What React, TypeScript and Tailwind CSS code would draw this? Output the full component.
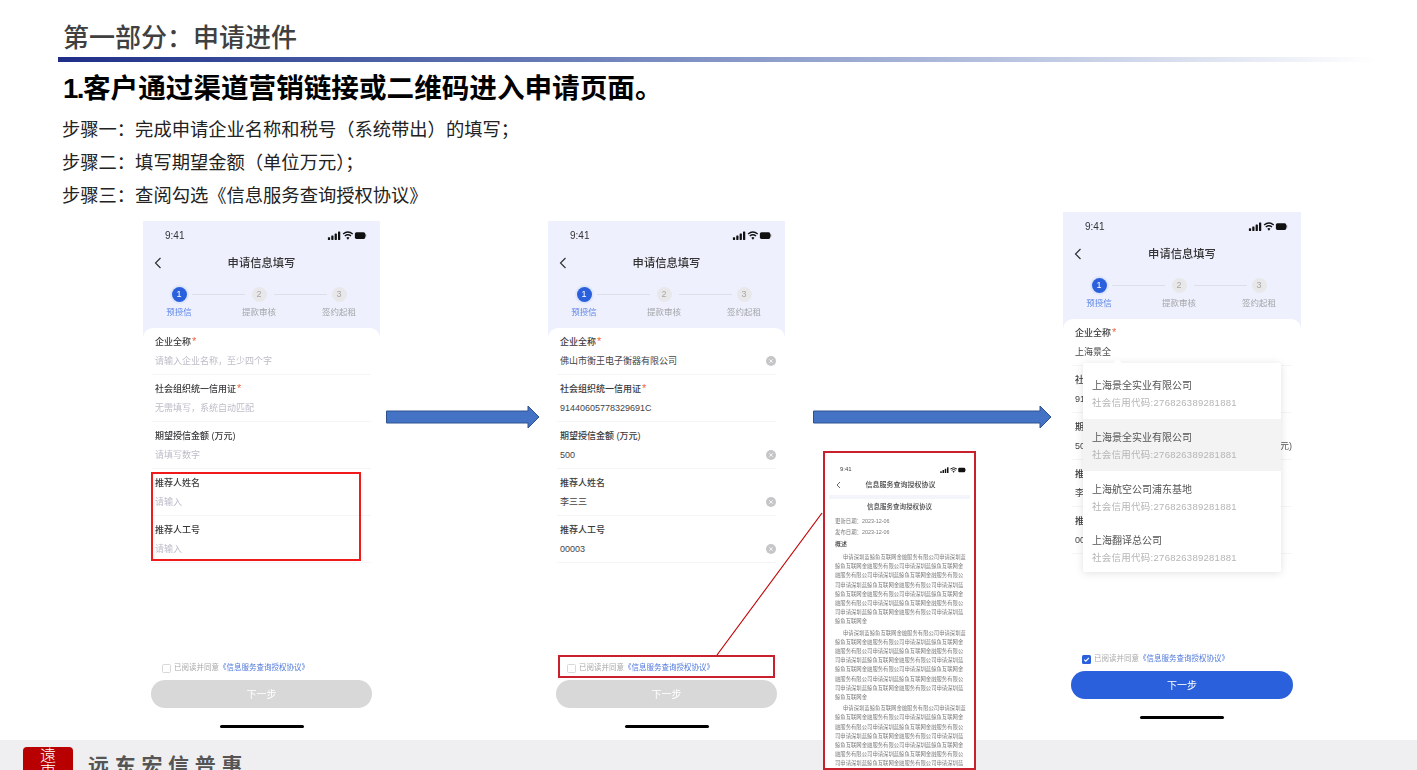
import React from "react";

const SANS = "font-['Liberation_Sans','Noto_Sans_CJK_SC',sans-serif]";

function StatusIcons({ small = false }: { small?: boolean }) {
  return (
    <svg width={small ? 26 : 42} height={small ? 6 : 9} viewBox="0 0 34 8" className="shrink-0">
      <rect x="0" y="5.5" width="2" height="2.5" rx="0.4" fill="#111" />
      <rect x="3" y="4" width="2" height="4" rx="0.4" fill="#111" />
      <rect x="6" y="2.2" width="2" height="5.8" rx="0.4" fill="#111" />
      <rect x="9" y="0.4" width="2" height="7.6" rx="0.4" fill="#111" />
      <path d="M13.5 2.6a7 7 0 0 1 8.6 0M15 4.4a4.6 4.6 0 0 1 5.6 0" stroke="#111" strokeWidth="1.2" fill="none" />
      <path d="M16.4 6a2.2 2.2 0 0 1 2.8 0l-1.4 1.7z" fill="#111" />
      <rect x="24" y="1" width="9.2" height="6" rx="1.4" fill="#111" />
      <rect x="33.4" y="3" width="0.6" height="2" fill="#111" />
    </svg>
  );
}

function Step({ n, label, active }: { n: number; label: string; active?: boolean }) {
  return (
    <div className="flex w-[60px] flex-col items-center">
      <div className={active ? "flex h-[19px] w-[19px] items-center justify-center rounded-full bg-[#dfe6fb]" : "flex h-[19px] w-[19px] items-center justify-center"}>
        <div className={active
          ? "flex h-[15px] w-[15px] items-center justify-center rounded-full bg-[#2b60dd] text-[9px] text-white"
          : "flex h-[15px] w-[15px] items-center justify-center rounded-full bg-[#e8e8ea] text-[9px] text-[#a8a8a8]"}>{n}</div>
      </div>
      <div className={active ? "mt-px text-[8.5px] leading-[14px] text-[#5f86e8]" : "mt-px text-[8.5px] leading-[14px] text-[#a5a5a8]"}>{label}</div>
    </div>
  );
}

type F = { label: string; req?: boolean; value?: string; placeholder?: string; clear?: boolean; suffix?: string };

function Field({ f }: { f: F }) {
  return (
    <div className="mx-[9px] h-[47px] border-b border-[#f5f5f7] pl-[3px] pt-[7px]">
      <div className="text-[9px] font-medium leading-[14px] text-[#3a3a3c]">
        {f.label}
        {f.req && <span className="ml-[1px] text-[11px] leading-[10px] text-[#f0653c]">*</span>}
      </div>
      <div className="mt-[5px] flex items-center justify-between text-[9px] leading-[14px]">
        <span className={f.value ? "text-[#444446]" : "text-[#bdbcc9]"}>{f.value ?? f.placeholder}</span>
        {f.clear && (
          <span className="flex h-[10px] w-[10px] items-center justify-center rounded-full bg-[#c6c6c8]">
            <svg width="6" height="6" viewBox="0 0 6 6"><path d="M1.3 1.3l3.4 3.4M4.7 1.3L1.3 4.7" stroke="#fff" strokeWidth="0.8" /></svg>
          </span>
        )}
        {f.suffix && <span className="text-[#555]">{f.suffix}</span>}
      </div>
    </div>
  );
}

function Phone({ fields, ready, className, children }: { fields: F[]; ready?: boolean; className: string; children?: React.ReactNode }) {
  return (
    <div className={"absolute flex h-[515px] flex-col bg-white " + className}>
      <div className="h-[122px] bg-[#eef1fd] blur-[0.3px]">
        <div className="flex h-[29px] items-center justify-between pl-[22px] pr-[12px]">
          <span className="text-[10px] leading-[14px] text-[#333]">9:41</span>
          <StatusIcons />
        </div>
        <div className="relative mt-[3px] flex h-[20px] items-center justify-center text-[11.3px] font-medium text-[#333]">
          <svg width="8" height="12" viewBox="0 0 8 12" className="absolute left-[11px]"><path d="M6.5 1L1.5 6l5 5" stroke="#333" strokeWidth="1.2" fill="none" /></svg>
          申请信息填写
        </div>
        <div className="relative mt-[12px] flex gap-[20px] pl-[6px]">
          <div className="absolute left-[49px] top-[9px] h-px w-[53px] bg-[#dcdfe8]" />
          <div className="absolute left-[131px] top-[9px] h-px w-[53px] bg-[#dcdfe8]" />
          <Step n={1} label="预授信" active />
          <Step n={2} label="提款审核" />
          <Step n={3} label="签约起租" />
        </div>
      </div>
      <div className="mt-[-15px] flex flex-1 flex-col rounded-t-[10px] bg-white blur-[0.3px]">
        {fields.map((f) => <Field key={f.label} f={f} />)}
        <div className="mt-auto flex items-center pl-[19px] text-[7.5px] leading-[12px]">
          {ready ? (
            <span className="mr-[3px] flex h-[9px] w-[9px] items-center justify-center rounded-[1.5px] bg-[#2b60dd]">
              <svg width="7" height="7" viewBox="0 0 7 7"><path d="M1.2 3.6l1.6 1.6L5.8 2" stroke="#fff" strokeWidth="1.1" fill="none" /></svg>
            </span>
          ) : (
            <span className="mr-[3px] h-[9px] w-[9px] rounded-[1.5px] border border-[#d8d8d8] bg-white" />
          )}
          <span className="text-[#a9a9ab]">已阅读并同意</span>
          <span className="text-[#4f78dc]">《信息服务查询授权协议》</span>
        </div>
        <div className={ready
          ? "mx-[8px] mt-[6px] flex h-[28px] items-center justify-center rounded-full bg-[#2b60dd] text-[10px] text-white"
          : "mx-[8px] mt-[6px] flex h-[28px] items-center justify-center rounded-full bg-[#d8d8d8] text-[10px] text-white"}>下一步</div>
        <div className="mx-auto mb-[8px] mt-[17px] h-[3px] w-[84px] rounded-full bg-black" />
      </div>
      {children}
    </div>
  );
}

const base = "申请深圳蓝鲸鱼互联网金融服务有限公司".repeat(12);

function Arrow({ width, className }: { width: number; className: string }) {
  return (
    <svg width={width} height="24" viewBox={`0 0 ${width} 24`} className={"absolute " + className}>
      <path
        d={`M0.5 6H${width - 12}V1L${width - 1} 12L${width - 12} 23V18H0.5Z`}
        fill="#4472c4"
        stroke="#2f528f"
        strokeWidth="1"
      />
    </svg>
  );
}

const companies = [
  { name: "上海景全实业有限公司", cls: "h-[56px] pl-[9px] pt-[15px]" },
  { name: "上海景全实业有限公司", cls: "h-[52px] bg-[#f3f3f3] pl-[9px] pt-[11px]" },
  { name: "上海航空公司浦东基地", cls: "h-[52px] pl-[9px] pt-[11px]" },
  { name: "上海翻译总公司", cls: "h-[49px] pl-[9px] pt-[10px]" },
];

export default function App() {
  return (
    <div className={"flex h-[770px] w-[1417px] flex-col overflow-hidden bg-white " + SANS}>
      <header className="h-[210px] pt-[21px]">
        <h1 className="pl-[63px] text-[26px] font-medium leading-[34px] text-[#404040]">第一部分：申请进件</h1>
        <div className="ml-[58px] mt-[2px] h-[5px] w-[1318px] bg-gradient-to-r from-[#1f2d87] to-white" />
        <h2 className="mt-[9px] pl-[63px] text-[27.6px] font-bold leading-[36px] text-black"><span className="tracking-[-1.5px]">1.</span>客户通过渠道营销链接或二维码进入申请页面。</h2>
        <div className="mt-[6px] pl-[62px] text-[18.3px] leading-[33px] text-[#222]">
          <p>步骤一：完成申请企业名称和税号（系统带出）的填写；</p>
          <p>步骤二：填写期望金额（单位万元）；</p>
          <p>步骤三：查阅勾选《信息服务查询授权协议》</p>
        </div>
      </header>

      <main className="relative flex-1">
        <Phone
          className="left-[143px] top-[11px] w-[237px]"
          fields={[
            { label: "企业全称", req: true, placeholder: "请输入企业名称，至少四个字" },
            { label: "社会组织统一信用证", req: true, placeholder: "无需填写，系统自动匹配" },
            { label: "期望授信金额 (万元)", placeholder: "请填写数字" },
            { label: "推荐人姓名", placeholder: "请输入" },
            { label: "推荐人工号", placeholder: "请输入" },
          ]}
        />
        <Phone
          className="left-[548px] top-[11px] w-[237px]"
          fields={[
            { label: "企业全称", req: true, value: "佛山市衡王电子衡器有限公司", clear: true },
            { label: "社会组织统一信用证", req: true, value: "91440605778329691C" },
            { label: "期望授信金额 (万元)", value: "500", clear: true },
            { label: "推荐人姓名", value: "李三三", clear: true },
            { label: "推荐人工号", value: "00003", clear: true },
          ]}
        />
        <Phone
          ready
          className="left-[1063px] top-[2px] w-[238px]"
          fields={[
            { label: "企业全称", req: true, value: "上海景全" },
            { label: "社会组织统一信用证", req: true, value: "91440605778329691C" },
            { label: "期望授信金额 (万元)", value: "500", suffix: "(万元)" },
            { label: "推荐人姓名", value: "李三三" },
            { label: "推荐人工号", value: "00003" },
          ]}
        >
          <div className="absolute left-[20px] top-[151px] z-10 w-[198px] rounded-[2px] bg-white shadow-[0_1px_8px_rgba(0,0,0,0.12)] blur-[0.3px]">
            <div className="absolute left-[31px] top-[-3px] h-[7px] w-[7px] rotate-45 bg-white" />
            {companies.map((c, i) => (
              <div key={i} className={c.cls}>
                <div className="text-[10px] leading-[16px] text-[#555]">{c.name}</div>
                <div className="mt-px text-[9.5px] leading-[16px] tracking-[0.27px] text-[#b5b5b5]">社会信用代码:276826389281881</div>
              </div>
            ))}
          </div>
        </Phone>

        <Arrow width={154} className="left-[386px] top-[195px]" />
        <Arrow width={239} className="left-[813px] top-[195px]" />

        <div className="absolute left-[151px] top-[262px] h-[89px] w-[210px] border-2 border-[#f01a1a]" />
        <div className="absolute left-[558px] top-[445px] h-[23px] w-[217px] border-2 border-[#c8202c]" />

        <svg width="110" height="146" viewBox="0 0 110 146" className="absolute left-[714px] top-[301px]">
          <path d="M108 2L3 144" stroke="#c00000" strokeWidth="1.2" fill="none" />
        </svg>

        <div className="absolute left-[823px] top-[241px] z-20 h-[319px] w-[153px] border-2 border-[#c8202c] bg-white text-[#7a7a7a]">
          <div className="blur-[0.35px]">
            <div className="flex h-[20px] items-end justify-between pl-[15px] pr-[8px]">
              <span className="text-[6px] leading-[8px] text-[#444]">9:41</span>
              <StatusIcons small />
            </div>
            <div className="relative mt-[4px] flex h-[16px] items-center justify-center pl-[2px] text-[7px] font-medium text-[#444]">
              <svg width="5" height="8" viewBox="0 0 5 8" className="absolute left-[11px]"><path d="M4 1L1 4l3 3" stroke="#444" strokeWidth="0.8" fill="none" /></svg>
              信息服务查询授权协议
            </div>
            <div className="mx-[4px] mt-[2px] h-[4px] bg-[#f3f5fb]" />
            <div className="px-[10px]">
              <div className="mt-[3px] text-center text-[6.5px] font-medium leading-[10px] text-[#444]">信息服务查询授权协议</div>
              <div className="mt-[4px] text-[5.4px] leading-[11px]">更新日期：2023-12-06</div>
              <div className="text-[5.4px] leading-[11px]">发布日期：2023-12-06</div>
              <div className="mt-[1px] text-[6px] font-medium leading-[10px] text-[#444]">概述</div>
              <div className="mt-[4px] flex flex-col gap-[2px]">
                {[0, 1, 2].map((i) => (
                  <p key={i} className="w-[131px] indent-[8px] text-[5.35px] leading-[9.2px]">
                    {base.slice(0, 173)}
                  </p>
                ))}
              </div>
            </div>
          </div>
        </div>
      </main>

      <footer className="flex h-[30px] items-start bg-[#efeff1] pl-[23px] pt-[7px]">
        <div className="flex h-[40px] w-[50px] shrink-0 justify-center rounded-t-[4px] bg-[#b80000] pt-[1px] text-[16px] font-light leading-[16px] text-white">
          <span className="w-[16px]">遠東</span>
        </div>
        <span className="ml-[15px] mt-[5px] whitespace-nowrap text-[21px] font-bold leading-[28px] tracking-[5.7px] text-[#555]">远东宏信普惠</span>
      </footer>
    </div>
  );
}
